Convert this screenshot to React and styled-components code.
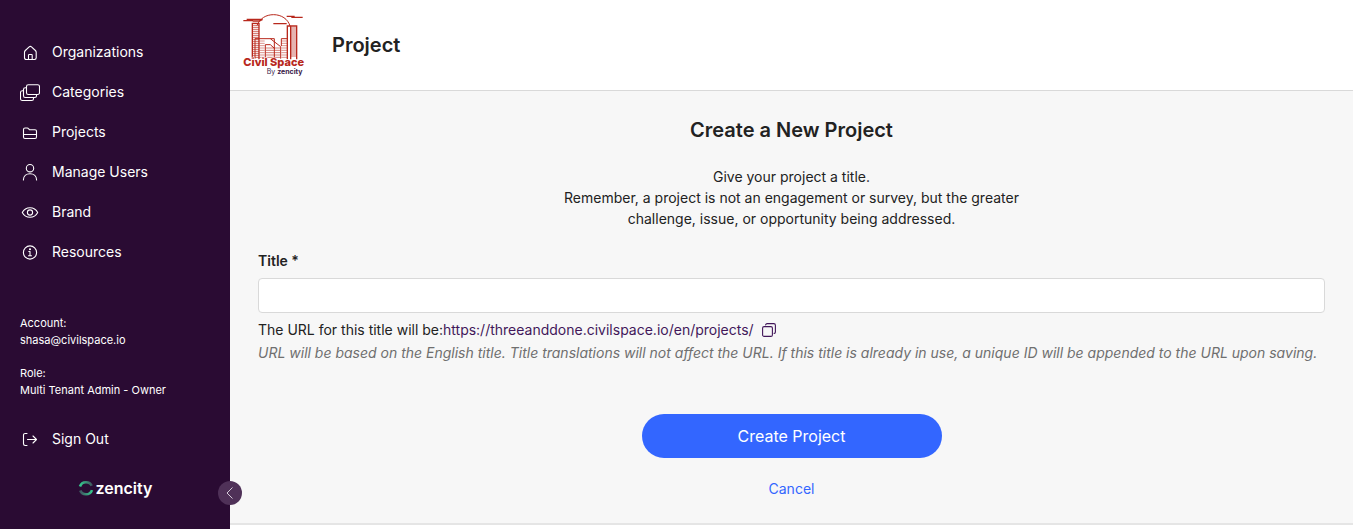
import { useState } from "react";
import styled, { createGlobalStyle } from "styled-components";

const GlobalStyle = createGlobalStyle`
  * {
    box-sizing: border-box;
  }

  body {
    margin: 0;
    font-family: Inter, "Liberation Sans", sans-serif;
    font-size: 14px;
    line-height: 22px;
    color: #222222;
    background: #ffffff;
  }

  h1, h2, p, dl, dd, ul {
    margin: 0;
    padding: 0;
  }
`;

const Icon = ({ children, size = 20 }) => (
  <svg
    width={size}
    height={size}
    viewBox={`0 0 ${size} ${size}`}
    fill="none"
    stroke="currentColor"
    strokeWidth="1.1"
    strokeLinecap="round"
    strokeLinejoin="round"
    aria-hidden="true"
  >
    {children}
  </svg>
);

const HomeIcon = () => (
  <Icon>
    <path d="M4.500 10.200c0-.7.3-1.200.8-1.700l3.900-3.600c.7-.6 1.600-.6 2.300 0l3.900 3.600c.5.5.8 1 .8 1.700v5.600c0 1-.7 1.700-1.700 1.700H6.200c-1 0-1.700-.7-1.700-1.700z" />
    <path d="M8.500 17.500v-4.300c0-.4.3-.7.7-.7h2.300c.4 0 .7.3.7.7v4.300" />
  </Icon>
);

const StackIcon = () => (
  <Icon>
    <rect x="6.500" y="2.800" width="13" height="9.700" rx="1.800" />
    <path d="M6 5.800H5.300c-1 0-1.800.8-1.800 1.800v6.100c0 1 .8 1.800 1.800 1.800h9.400c1 0 1.800-.8 1.800-1.800V13" />
    <path d="M3 8.800h-.7c-1 0-1.800.8-1.800 1.800v6.100c0 1 .8 1.800 1.800 1.800h9.400c1 0 1.800-.8 1.800-1.800V16" />
  </Icon>
);

const FolderIcon = () => (
  <Icon>
    <path d="M3.500 7.500c0-1 .6-1.500 1.500-1.500h2.300c.5 0 .9.200 1.200.6l.9 1.100h5.600c.9 0 1.500.6 1.500 1.400v5.800c0 .9-.6 1.600-1.500 1.600H5c-.9 0-1.500-.7-1.500-1.600z" />
    <path d="M3.500 12.500h13" />
  </Icon>
);

const UserIcon = () => (
  <Icon>
    <circle cx="10" cy="6.200" r="3.700" />
    <path d="M3.400 18c0-3.900 2.900-6.200 6.600-6.200s6.600 2.300 6.600 6.200" />
  </Icon>
);

const EyeIcon = () => (
  <Icon>
    <path d="M2.300 10.500C4 7.300 6.800 5.700 10 5.700s6 1.600 7.700 4.800c-1.700 3.200-4.500 4.800-7.700 4.800s-6-1.600-7.700-4.800z" />
    <circle cx="10" cy="10.500" r="2.600" />
  </Icon>
);

const InfoIcon = () => (
  <Icon>
    <circle cx="10" cy="10.500" r="6.600" />
    <path d="M8.800 9.500H10v4M8.500 13.700h3" />
    <circle cx="10" cy="7.300" r=".5" fill="currentColor" />
  </Icon>
);

const SignOutIcon = () => (
  <Icon>
    <path d="M7 4.500H5.200c-1 0-1.700.7-1.700 1.700v8.600c0 1 .7 1.700 1.700 1.700H7" />
    <path d="M7.500 10.500h9M13 7l3.500 3.500L13 14" />
  </Icon>
);

const CopyIcon = () => (
  <Icon size={14}>
    <rect x=".6" y="3.600" width="9.800" height="9.800" rx="1.500" />
    <path d="M3.600 1.900C3.800 1.100 4.300.6 5.100.6h6.700c.9 0 1.600.7 1.600 1.600v6.700c0 .8-.5 1.400-1.300 1.500" />
  </Icon>
);

const floors = (from, to, step) => {
  const list = [];
  for (let y = from; y <= to; y += step) list.push(y);
  return list;
};

const CivilSpaceLogo = () => (
  <svg
    width="64"
    height="66"
    viewBox="20 24 192 198"
    fill="none"
    stroke="#b8281c"
    role="img"
    aria-label="Civil Space by Zencity"
  >
    <path d="M65 64C74 43 92 32 115 32s43 13 49 34" strokeWidth="3" />
    <path d="M24 50h29M34 46h48M52 51h20l10-5M154 37h24M168 40h34M114 59h40" strokeWidth="4" />
    <path d="M51 166V58h20v108M156 166V66h28v100M166 66v100" strokeWidth="4" />
    {floors(64, 160, 6).map((y) => (
      <path key={y} d={`M51 ${y}h20`} strokeWidth="3" opacity=".7" />
    ))}
    {floors(72, 160, 6).map((y) => (
      <path key={y} d={`M166 ${y}h17`} strokeWidth="3" opacity=".7" />
    ))}
    <path d="M59 164v-60h58v60M90 164v-42h15l13 12M105 104l31 24v36M138 104h18M138 104v22" strokeWidth="3" />
    {floors(111, 160, 7).map((y) => (
      <path key={y} d={`M72 ${y}h16M138 ${y}h17`} strokeWidth="3" opacity=".5" />
    ))}
    {floors(132, 160, 7).map((y) => (
      <path key={y} d={`M92 ${y}h42`} strokeWidth="3" opacity=".6" />
    ))}
    <text x="24" y="186" fontSize="33" fontWeight="800" fill="#b8281c" stroke="#ffffff" strokeWidth="3" paintOrder="stroke">
      Civil Space
    </text>
    <text x="94" y="210" fontSize="21" fill="#3a1a4a" stroke="none">
      By <tspan fontWeight="700">zencity</tspan>
    </text>
  </svg>
);

const ZencityMark = () => (
  <svg width="16" height="16" viewBox="0 0 16 16" fill="none" strokeWidth="2.600" aria-hidden="true">
    <defs>
      <linearGradient id="arcTop">
        <stop offset="0" stopColor="#35c78d" />
        <stop offset="1" stopColor="#3f5a60" />
      </linearGradient>
      <linearGradient id="arcBottom">
        <stop offset="0" stopColor="#3f5560" />
        <stop offset="1" stopColor="#35c78d" />
      </linearGradient>
    </defs>
    <path d="M2 6.500C3 3.500 5.200 2.200 8 2.200c2.600 0 4.700 1.200 5.700 3.600" stroke="url(#arcTop)" />
    <path d="M2.200 10.500c1 2.400 3.200 3.800 5.800 3.800 2.900 0 5-1.500 6-4.200" stroke="url(#arcBottom)" />
  </svg>
);

const navItems = [
  { label: "Organizations", icon: HomeIcon },
  { label: "Categories", icon: StackIcon },
  { label: "Projects", icon: FolderIcon },
  { label: "Manage Users", icon: UserIcon },
  { label: "Brand", icon: EyeIcon },
  { label: "Resources", icon: InfoIcon },
];

const projectsUrl = "https://threeanddone.civilspace.io/en/projects/";

export default function App() {
  const [title, setTitle] = useState("");

  return (
    <Page>
      <GlobalStyle />
      <Sidebar>
        <NavList>
          {navItems.map(({ label, icon: NavIcon }) => (
            <li key={label}>
              <NavLink href="#">
                <NavIcon />
                {label}
              </NavLink>
            </li>
          ))}
        </NavList>

        <Account>
          <div>
            <dt>Account:</dt>
            <dd>shasa@civilspace.io</dd>
          </div>
          <div>
            <dt>Role:</dt>
            <dd>Multi Tenant Admin - Owner</dd>
          </div>
        </Account>

        <NavLink href="#">
          <SignOutIcon />
          Sign Out
        </NavLink>

        <Brand>
          <ZencityMark />
          zencity
        </Brand>

        <CollapseButton type="button" aria-label="Collapse menu">
          <svg width="12" height="12" viewBox="0 0 12 12" fill="none" stroke="currentColor" aria-hidden="true">
            <path d="M8.500 .5L3 6l5.500 5.500" />
          </svg>
        </CollapseButton>
      </Sidebar>

      <Main>
        <Header>
          <CivilSpaceLogo />
          <Heading as="h1">Project</Heading>
        </Header>

        <Content onSubmit={(e) => e.preventDefault()}>
          <Heading>Create a New Project</Heading>
          <Intro>
            Give your project a title.
            <br />
            Remember, a project is not an engagement or survey, but the greater
            challenge, issue, or opportunity being addressed.
          </Intro>

          <Field>
            <label htmlFor="title">Title *</label>
            <input
              id="title"
              type="text"
              value={title}
              onChange={(e) => setTitle(e.target.value)}
            />
          </Field>

          <UrlRow>
            The URL for this title will be:
            <a href="#">{projectsUrl}</a>
            <CopyButton type="button" aria-label="Copy URL">
              <CopyIcon />
            </CopyButton>
          </UrlRow>
          <Hint>
            URL will be based on the English title. Title translations will not
            affect the URL. If this title is already in use, a unique ID will be
            appended to the URL upon saving.
          </Hint>

          <Actions>
            <SubmitButton type="submit">Create Project</SubmitButton>
            <CancelLink href="#">Cancel</CancelLink>
          </Actions>
        </Content>
      </Main>
    </Page>
  );
}

const Page = styled.div`
  display: flex;
  min-height: 100vh;
`;

const Sidebar = styled.aside`
  position: relative;
  display: flex;
  flex-direction: column;
  flex: 0 0 230px;
  padding-top: 32px;
  color: #ffffff;
  background: #2a0b33;
`;

const NavList = styled.ul`
  list-style: none;
`;

const NavLink = styled.a`
  display: flex;
  align-items: center;
  gap: 12px;
  height: 40px;
  padding: 0 20px;
  color: #ffffff;
  text-decoration: none;
`;

const Account = styled.dl`
  display: flex;
  flex-direction: column;
  gap: 16px;
  padding: 43px 20px 20px;
  font-size: 11px;
  line-height: 17px;
`;

const Brand = styled.div`
  display: flex;
  align-items: center;
  justify-content: center;
  gap: 2px;
  padding-top: 18px;
  font-size: 16px;
  font-weight: 600;
`;

const CollapseButton = styled.button`
  position: absolute;
  right: -12px;
  bottom: 24px;
  display: flex;
  align-items: center;
  justify-content: center;
  width: 24px;
  height: 24px;
  padding: 0;
  border: 0;
  border-radius: 50%;
  color: #d5cbd8;
  background: #4f3158;
  cursor: pointer;
`;

const Main = styled.main`
  flex: 1;
  min-width: 0;
`;

const Header = styled.header`
  display: flex;
  align-items: center;
  gap: 26px;
  height: 91px;
  padding: 0 12px;
  border-bottom: 1px solid #d9d9d9;
`;

const Heading = styled.h2`
  font-size: 20px;
  font-weight: 600;
  line-height: 28px;
`;

const Content = styled.form`
  display: flex;
  flex-direction: column;
  align-items: center;
  padding: 25px 28px 23px;
  border-bottom: 2px solid #e5e5e5;
  background: #f7f7f7;
`;

const Intro = styled.p`
  max-width: 480px;
  padding: 22px 0 21px;
  line-height: 21px;
  text-align: center;
`;

const Field = styled.div`
  display: flex;
  flex-direction: column;
  gap: 6px;
  width: 100%;

  label {
    font-weight: 600;
  }

  input {
    height: 35px;
    padding: 0 12px;
    border: 1px solid #d9d9d9;
    border-radius: 4px;
    font: inherit;
    background: #ffffff;
  }
`;

const UrlRow = styled.div`
  display: flex;
  align-items: center;
  align-self: flex-start;
  padding-top: 6px;

  a {
    color: #42175a;
    text-decoration: none;
  }
`;

const CopyButton = styled.button`
  display: flex;
  margin-left: 8px;
  padding: 0;
  border: 0;
  color: #42175a;
  background: none;
  cursor: pointer;
`;

const Hint = styled.p`
  align-self: flex-start;
  font-style: italic;
  line-height: 24px;
  color: #6f6f6f;
`;

const Actions = styled.div`
  display: flex;
  flex-direction: column;
  align-items: center;
  gap: 20px;
  padding-top: 49px;
`;

const SubmitButton = styled.button`
  width: 300px;
  height: 44px;
  border: 0;
  border-radius: 22px;
  font-family: inherit;
  font-size: 16px;
  color: #ffffff;
  background: #3366ff;
  cursor: pointer;
`;

const CancelLink = styled.a`
  color: #3366ff;
  text-decoration: none;
`;
